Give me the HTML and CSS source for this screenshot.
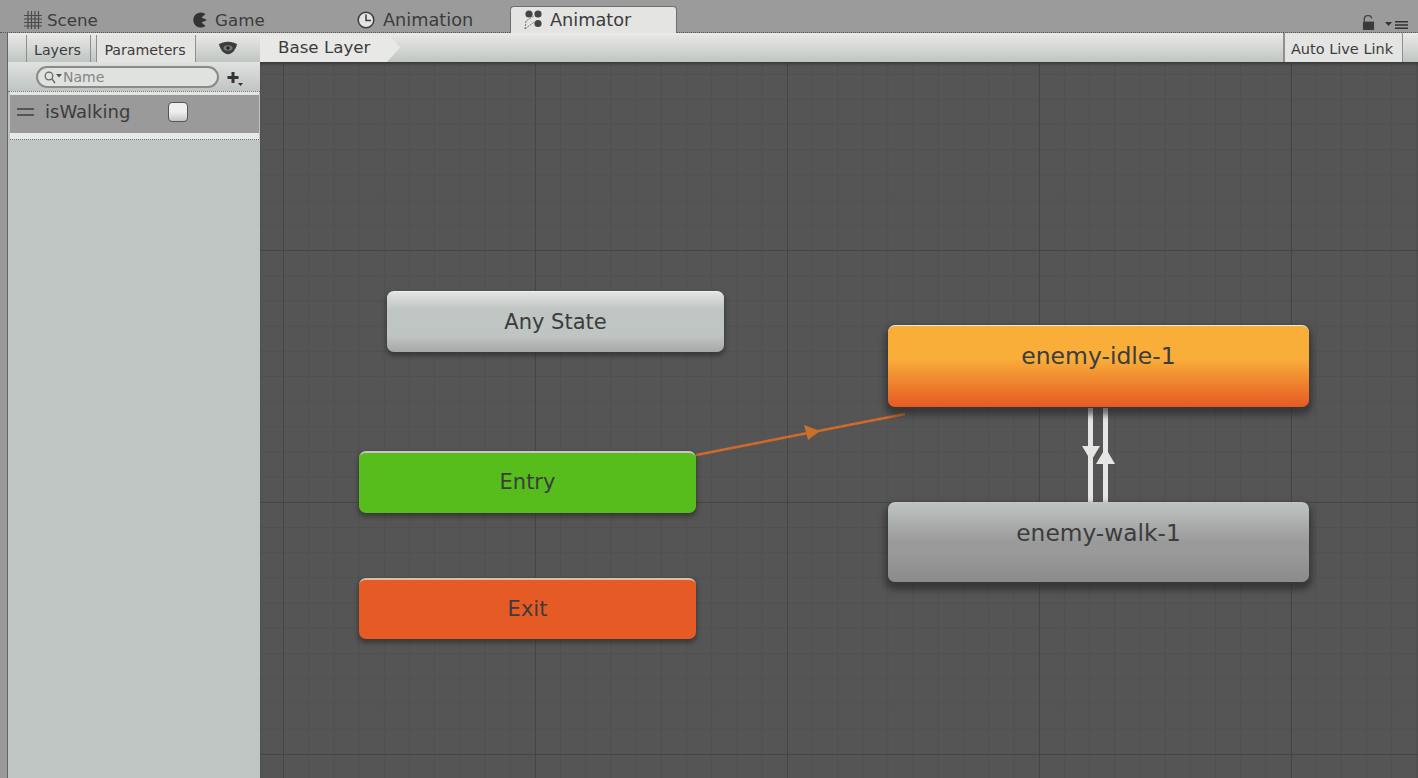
FILE: index.html
```html
<!DOCTYPE html>
<html lang="en">
<head>
  <meta charset="UTF-8" />
  <title>Animator</title>
  <link rel="stylesheet" href="styles.css">
</head>
<body>
  <div class="tabbar">
    <div class="tab tab-scene">
      <svg class="tab-icon" viewBox="0 0 18 18"><path d="M4 0v18M7.500 0v18M11 0v18M14.500 0v18M0 4.500h18M0 8h18M0 11.500h18M0 15h18" stroke="#4a4a4a" stroke-width="1.200" fill="none"/></svg>
      Scene
    </div>
    <div class="tab tab-game">
      <svg class="tab-icon" viewBox="0 0 18 18"><path d="M14.500 3A7.600 7.600 0 1 0 14.500 15L10.500 11.500 16 9 10.500 6.500Z" fill="#333"/></svg>
      Game
    </div>
    <div class="tab tab-animation">
      <svg class="tab-icon" viewBox="0 0 18 18"><circle cx="9" cy="9" r="7.800" fill="#e4e4e2" stroke="#3c3c3c" stroke-width="1.500"/><path d="M9 3.500v6h5" stroke="#3c3c3c" stroke-width="1.500" fill="none"/></svg>
      Animation
    </div>
    <div class="tab tab-animator">
      <svg class="tab-icon" viewBox="0 0 20 20"><circle cx="5" cy="4" r="3.600" fill="#444"/><circle cx="14" cy="4" r="3.600" fill="#444"/><circle cx="14" cy="13.500" r="3.600" fill="#444"/><path d="M1 19l1-8 8-5M1 19l9-7" stroke="#777" stroke-width="1" stroke-dasharray="2 1" fill="none"/></svg>
      Animator
    </div>
    <div class="tabbar-right">
      <svg class="lock" viewBox="0 0 14 16"><path d="M2.500 7V4.500a4 3.500 0 0 1 8-1" stroke="#444" stroke-width="1.500" fill="none"/><rect x="1" y="7" width="12" height="9" fill="#3a3a3a"/></svg>
      <svg class="menu" viewBox="0 0 23 8"><path d="M0 1h7L3.500 5Z" fill="#333"/><path d="M10 .8h13M10 4h13M10 7.200h13" stroke="#333" stroke-width="1.600"/></svg>
    </div>
  </div>

  <div class="main">
    <aside class="sidebar">
      <div class="side-toolbar">
        <div class="side-btn btn-layers">Layers</div>
        <div class="side-btn btn-params">Parameters</div>
        <svg class="eye" viewBox="0 0 22 14"><path d="M1 3C6-1 16-1 21 3 19 10 15 14 11 14S3 10 1 3Z" fill="#3c3c3c"/><ellipse cx="11" cy="7" rx="5" ry="3" fill="#777"/><circle cx="11" cy="7" r="1.800" fill="#222"/></svg>
      </div>
      <div class="search-row">
        <div class="search">
          <svg class="search-icon" viewBox="0 0 20 14"><circle cx="6" cy="6" r="3.800" fill="none" stroke="#666" stroke-width="1.300"/><path d="M9 9l3 4" stroke="#666" stroke-width="1.300"/><path d="M13 4h6l-3 3.500Z" fill="#555"/></svg>
          <span>Name</span>
        </div>
        <svg class="plus" viewBox="0 0 18 18"><path d="M7 2v11M1.500 7.500h11" stroke="#333" stroke-width="3" fill="none"/><path d="M12 13h5l-2.500 3Z" fill="#333"/></svg>
      </div>
      <div class="param-list">
        <div class="param">
          <div class="handle"></div>
          <span class="param-name">isWalking</span>
          <div class="checkbox"></div>
        </div>
      </div>
    </aside>

    <section class="editor">
      <div class="editor-toolbar">
        <div class="crumb">Base Layer</div>
        <div class="live-link">Auto Live Link</div>
      </div>
      <div class="canvas">
        <svg class="links" width="1158" height="716" viewBox="260 62 1158 716">
          <line class="link-active" x1="696" y1="455" x2="905" y2="414"/>
          <line class="link-active-dash" x1="696" y1="455" x2="905" y2="414"/>
          <polygon class="link-active-head" points="820,431 804,425 808,440"/>
          <line class="link" x1="1090.500" y1="408" x2="1090.500" y2="502"/>
          <line class="link" x1="1105.500" y1="408" x2="1105.500" y2="502"/>
          <polygon class="link-head" points="1082,446 1100,446 1091,461"/>
          <polygon class="link-head" points="1096,464 1115,464 1105.500,448"/>
        </svg>
        <div class="node node-any">Any State</div>
        <div class="node node-entry">Entry</div>
        <div class="node node-exit">Exit</div>
        <div class="node node-idle">enemy-idle-1</div>
        <div class="node node-walk">enemy-walk-1</div>
      </div>
    </section>
  </div>
</body>
</html>
```

FILE: styles.css
```css
* {
  box-sizing: border-box;
}

html, body {
  height: 100%;
}

body {
  margin: 0;
  overflow: hidden;
  background-color: #9a9a9a;
  color: #3c3c3c;
  font-family: "DejaVu Sans", sans-serif;
}

/* top tabs */
.tabbar {
  display: flex;
  height: 33px;
  padding-top: 6px;
  border-bottom: 1px dotted #555;
  background-color: #9b9b9b;
}

.tab {
  display: flex;
  align-items: center;
  gap: 6px;
  height: 27px;
  font-size: 17.700px;
  white-space: nowrap;
}

.tab-icon {
  width: 18px;
  height: 18px;
  flex: none;
}

.tab-scene {
  margin-left: 24px;
  width: 167px;
  gap: 5px;
  font-size: 16.700px;
}

.tab-game {
  width: 166px;
  gap: 6px;
  font-size: 16.700px;
}

.tab-animation {
  width: 153px;
  gap: 8px;
}

.tab-animator {
  width: 167px;
  height: 28px;
  padding: 0 0 2px 13px;
  gap: 6px;
  background-color: #e4e4e2;
  border: 1px solid #6e6e6e;
  border-bottom: none;
  border-radius: 4px 4px 0 0;
}

.tab-animator .tab-icon {
  width: 20px;
  height: 20px;
}

.tabbar-right {
  display: flex;
  align-items: flex-end;
  gap: 10px;
  margin-left: auto;
  padding: 0 10px 2px 0;
}

.lock {
  width: 13px;
  height: 15px;
}

.menu {
  width: 23px;
  height: 8px;
  margin-bottom: 1px;
}

/* main area */
.main {
  display: flex;
  height: 745px;
  padding-left: 7px;
}

.sidebar {
  display: flex;
  flex-direction: column;
  width: 253px;
  flex: none;
  background-color: #bfc5c2;
  border-left: 1px solid #666;
}

.side-toolbar {
  display: flex;
  align-items: stretch;
  height: 29px;
  padding: 2px 0 0 18px;
  background: linear-gradient(#ebebe9, #bfc5c2);
}

.side-btn {
  display: flex;
  align-items: center;
  justify-content: center;
  padding: 2px 2px 0 0;
  font-size: 14.200px;
  border-left: 1px solid #8f8f8f;
  border-right: 1px solid #8f8f8f;
}

.btn-layers {
  width: 65px;
}

.btn-params {
  width: 100px;
  margin-left: 5px;
  background-color: #e4e4e2;
}

.eye {
  width: 20px;
  height: 14px;
  margin: 6px 0 0 22px;
}

.search-row {
  display: flex;
  align-items: center;
  gap: 7px;
  height: 30px;
  padding-left: 28px;
  background: linear-gradient(#e0e2e0, #bfc5c2);
  border-bottom: 1px dotted #777;
}

.search {
  display: flex;
  align-items: center;
  gap: 0;
  width: 183px;
  height: 22px;
  padding-left: 5px;
  font-size: 14px;
  color: #858585;
  background-color: #dfe2df;
  border: 2px solid #8a8a8a;
  border-radius: 11px;
}

.search-icon {
  width: 20px;
  height: 14px;
}

.plus {
  width: 18px;
  height: 18px;
  margin-top: 5px;
}

.param-list {
  margin-left: 2px;
  margin-right: 1px;
  padding-top: 3px;
  background-color: #e4e4e2;
  border-bottom: 1px dotted #666;
}

.param {
  display: flex;
  align-items: center;
  height: 38px;
  padding: 0 0 5px 7px;
  background-color: #9a9a9a;
}

.handle {
  width: 17px;
  height: 8px;
  border-top: 2px solid #555;
  border-bottom: 2px solid #555;
}

.param-name {
  width: 123px;
  margin-left: 11px;
  font-size: 18px;
}

.checkbox {
  width: 20px;
  height: 20px;
  background: linear-gradient(#eeeeec 50%, #c4c6c4);
  border: 1px solid #555;
  border-radius: 4px;
}

.param-list::after {
  content: "";
  display: block;
  height: 6px;
  background-color: #e8e8e6;
}

/* graph editor */
.editor {
  display: flex;
  flex-direction: column;
  flex: 1;
  min-width: 0;
}

.editor-toolbar {
  display: flex;
  justify-content: space-between;
  height: 29px;
  padding-right: 15px;
  background: linear-gradient(#ebebe9, #bfc5c2);
}

.crumb {
  display: flex;
  align-items: center;
  width: 140px;
  padding: 0 0 1px 18px;
  font-size: 16.700px;
  background-color: #e8e8e6;
  clip-path: polygon(0 0, 127px 0, 100% 50%, 127px 100%, 0 100%);
}

.live-link {
  display: flex;
  align-items: center;
  justify-content: center;
  width: 120px;
  padding: 2px 3px 0 0;
  font-size: 14.500px;
  background-color: #e4e4e2;
  border-left: 2px solid #8f8f8f;
  border-right: 1px solid #8f8f8f;
}

.canvas {
  position: relative;
  flex: 1;
  background-color: #555;
  background-image:
    linear-gradient(to right, #464646 1px, transparent 1px),
    linear-gradient(to bottom, #464646 1px, transparent 1px),
    linear-gradient(to right, #505050 1px, transparent 1px),
    linear-gradient(to bottom, #505050 1px, transparent 1px);
  background-size: 252px 100%, 100% 252px, 25.200px 100%, 100% 25.200px;
  background-position: 23px 0, 0 188px, 23px 0, 0 188px;
  box-shadow: inset 0 3px 3px -1px #3a3a3a;
}

.links {
  position: absolute;
  left: 0;
  top: 0;
}

.link-active {
  stroke: #e8602a;
  stroke-width: 2.500;
}

.link-active-dash {
  stroke: #5f9a2e;
  stroke-width: 1.500;
  stroke-dasharray: 2 5;
}

.link-active-head {
  fill: #c8702c;
}

.link {
  stroke: #e6e6e4;
  stroke-width: 5;
}

.link-head {
  fill: #e6e6e4;
}

/* state nodes */
.node {
  position: absolute;
  display: flex;
  align-items: center;
  justify-content: center;
  font-size: 21px;
  border-radius: 7px;
  box-shadow: 0 3px 4px 1px rgba(40, 40, 40, 0.6);
}

.node-any {
  left: 127px;
  top: 229px;
  width: 337px;
  height: 61px;
  background: linear-gradient(#e2e4e2, #c8ccca 22%, #bfc5c2 30%, #bfc5c2 72%, #a6a8a7);
  border-top: 1px solid #f0f0ee;
}

.node-entry {
  left: 99px;
  top: 389px;
  width: 337px;
  height: 62px;
  padding-bottom: 2px;
  background-color: #57bd1c;
  border-top: 2px solid #c4c8c4;
}

.node-exit {
  left: 99px;
  top: 516px;
  width: 337px;
  height: 61px;
  padding-bottom: 2px;
  background-color: #e65a25;
  border-top: 2px solid #d8c0a8;
}

.node-idle {
  left: 628px;
  top: 263px;
  width: 421px;
  height: 82px;
  padding-bottom: 22px;
  font-size: 23.500px;
  background: linear-gradient(#f9ae3a, #f9ae3a 40%, #f08a30 65%, #e75a24);
  border-top: 1px solid #e8e8e0;
  box-shadow: 0 5px 6px 3px rgba(40, 40, 40, 0.65);
}

.node-walk {
  left: 628px;
  top: 440px;
  width: 421px;
  height: 80px;
  padding-bottom: 19px;
  font-size: 23.300px;
  background: linear-gradient(#bfc5c2, #9a9a9a 50%, #9a9a9a 62%, #8b8b8b);
  box-shadow: 0 5px 6px 3px rgba(40, 40, 40, 0.65);
}
```
